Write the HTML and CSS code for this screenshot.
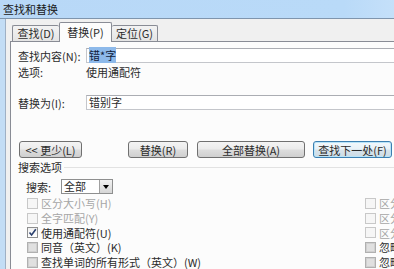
FILE: index.html
```html
<!DOCTYPE html>
<html lang="zh-CN">
<head>
    <meta charset="UTF-8">
    <title>查找和替换</title>
    <link rel="stylesheet" href="styles.css">
</head>
<body>
    <div class="window">
        <div class="titlebar">查找和替换</div>
        <div class="frame">
            <div class="client">
                <!-- 标签页 -->
                <div class="tabs">
                    <div class="tab">查找(D)</div>
                    <div class="tab active">替换(P)</div>
                    <div class="tab">定位(G)</div>
                </div>

                <div class="panel">
                    <div class="row row-find">
                        <span class="label">查找内容(N):</span>
                        <div class="field"><span class="sel">错*字</span></div>
                    </div>
                    <div class="row row-opts">
                        <span class="label">选项:</span>
                        <span>使用通配符</span>
                    </div>
                    <div class="row row-replace">
                        <span class="label">替换为(I):</span>
                        <div class="field">错别字</div>
                    </div>

                    <div class="buttons">
                        <button class="btn btn-less">&lt;&lt; 更少(L)</button>
                        <button class="btn btn-replace">替换(R)</button>
                        <button class="btn btn-all">全部替换(A)</button>
                        <button class="btn btn-next">查找下一处(F)</button>
                    </div>

                    <div class="group-title"><span>搜索选项</span><i class="rule"></i></div>
                    <div class="row row-search">
                        <span class="search-label">搜索:</span>
                        <div class="combo"><span>全部</span><i class="drop"></i></div>
                    </div>

                    <div class="checks">
                        <label class="check disabled"><i class="box"></i>区分大小写(H)</label>
                        <label class="check disabled"><i class="box"></i>区分前缀(X)</label>
                        <label class="check disabled"><i class="box"></i>全字匹配(Y)</label>
                        <label class="check disabled"><i class="box"></i>区分后缀(T)</label>
                        <label class="check"><i class="box checked"><svg width="9" height="9" viewBox="0 0 9 9"><path d="M1.5 4.5 L3.6 7 L7.8 1.2" fill="none" stroke="#2a3f6e" stroke-width="1.6"/></svg></i>使用通配符(U)</label>
                        <label class="check disabled"><i class="box"></i>区分全/半角(M)</label>
                        <label class="check"><i class="box grey"></i>同音（英文）(K)</label>
                        <label class="check"><i class="box grey"></i>忽略标点符号(S)</label>
                        <label class="check"><i class="box grey"></i>查找单词的所有形式（英文）(W)</label>
                        <label class="check"><i class="box grey"></i>忽略空格(A)</label>
                    </div>
                </div>
            </div>
        </div>
    </div>
</body>
</html>
```

FILE: styles.css
```css
* { margin: 0; padding: 0; box-sizing: border-box; }
body {
    width: 394px;
    height: 269px;
    overflow: hidden;
    font-family: "Noto Sans CJK SC", "Noto Sans", sans-serif;
    font-size: 11px;
    line-height: 14px;
    color: #2b2b2b;
    background: #f0f0f0;
}
.window { width: 430px; height: 269px; display: flex; flex-direction: column; }

/* 标题栏 */
.titlebar {
    height: 20px;
    padding-left: 3px;
    line-height: 18px;
    background: linear-gradient(90deg, #b8d8f7 0%, #b9daf8 80%, #cde4fa 100%);
    border-bottom: 1px solid #7f95ad;
    color: #1a1a1a;
}
.frame { flex: 1; display: flex; border-left: 5px solid #c3ddf5; }
.client {
    flex: 1;
    display: flex;
    flex-direction: column;
    background: #f0f0f0;
    border-left: 1px solid #9fb0c4;
    padding: 3px 0 0 4px;
}

/* 标签页 */
.tabs { display: flex; align-items: flex-end; height: 19px; margin-left: 2px; position: relative; z-index: 1; }
.tab {
    height: 16px;
    line-height: 15px;
    text-align: center;
    border: 1px solid #898c95;
    border-bottom: none;
    border-radius: 2px 2px 0 0;
    background: linear-gradient(#f3f3f3, #e4e4e4);
}
.tab:nth-child(1) { width: 47px; border-right: none; }
.tab:nth-child(3) { width: 46px; border-left: none; }
.tab.active { width: 53px; height: 20px; margin-bottom: -1px; line-height: 18px; background: #fcfcfc; }

.panel {
    flex: 1;
    background: #fcfcfc;
    border-top: 1px solid #898c95;
    border-left: 1px solid #898c95;
    padding-left: 7px;
}
.row { display: flex; align-items: center; }
.label { width: 68px; flex-shrink: 0; }
.row-find { margin-top: 6px; height: 15px; }
.row-opts { margin-top: 2px; height: 14px; }
.row-replace { margin-top: 16px; height: 15px; }
.field {
    width: 330px;
    height: 15px;
    padding-left: 2px;
    line-height: 13px;
    background: #fff;
    border: 1px solid #c4c6cb;
    border-top-color: #abadb3;
}
.sel { background: #8db9ea; color: #10203a; }

/* 按钮 */
.buttons { display: flex; margin-top: 31px; height: 17px; }
.btn {
    height: 17px;
    font: inherit;
    line-height: 14px;
    color: #2b2b2b;
    border: 1px solid #707070;
    border-radius: 3px;
    background: linear-gradient(#f4f4f4, #ebebeb 48%, #dddddd 52%, #cfcfcf);
}
.btn-less { width: 63px; margin-left: 1px; }
.btn-replace { width: 60px; margin-left: 46px; }
.btn-all { width: 108px; margin-left: 9px; }
.btn-next {
    width: 79px;
    margin-left: 8px;
    border-color: #3c7fb1;
    box-shadow: inset 0 0 0 1px #b9e4f8;
    background: linear-gradient(#f2f8fc, #e8f1f7 48%, #d8e4ec 52%, #cddbe5);
}

/* 搜索选项 */
.group-title { display: flex; align-items: center; margin-top: 2px; height: 14px; }
.rule { flex: 1; margin-left: 2px; border-top: 1px solid #e2e2e2; }
.row-search { margin-top: 5px; height: 15px; padding-left: 8px; }
.search-label { width: 35px; }
.combo {
    width: 52px;
    height: 15px;
    display: flex;
    justify-content: space-between;
    background: #fff;
    border: 1px solid #8e8f8f;
    padding-left: 2px;
    line-height: 13px;
}
.drop {
    width: 13px;
    border-left: 1px solid #a0a0a0;
    background: linear-gradient(#f2f2f2, #d6d6d6);
    position: relative;
}
.drop::after {
    content: "";
    position: absolute;
    left: 3px;
    top: 5px;
    border: 3px solid transparent;
    border-top: 4px solid #000;
    border-bottom: none;
}

.checks {
    display: grid;
    grid-template-columns: 338px 200px;
    grid-auto-rows: 14.7px;
    margin-top: 2px;
    padding-left: 9px;
}
.check { display: flex; align-items: center; white-space: nowrap; }
.check.disabled { color: #a6a6a6; }
.box {
    width: 11px;
    height: 11px;
    margin-right: 3px;
    border: 1px solid #c8c8c8;
    background: #f6f6f6;
    display: flex;
    align-items: center;
    justify-content: center;
}
.box.checked { border-color: #8e8f8f; background: linear-gradient(#f0f0f0, #ffffff); }
.box.grey { border-color: #b0b0b0; background: #e0e0e0; box-shadow: inset 0 0 0 1px #d0d0d0; }
```
